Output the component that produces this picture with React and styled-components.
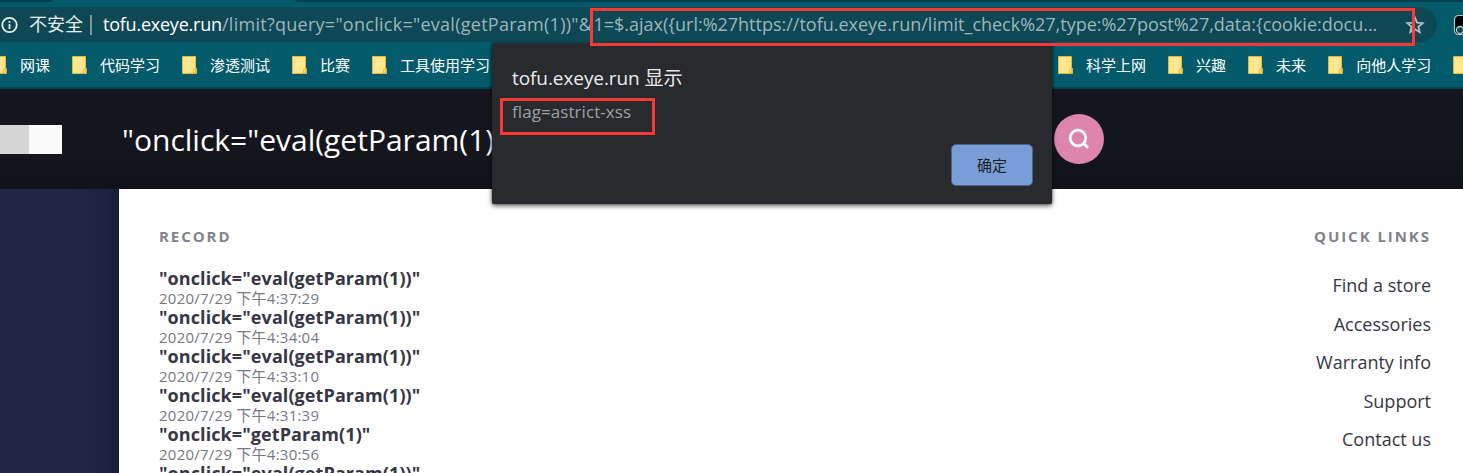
import React from 'react';
import styled, { createGlobalStyle } from 'styled-components';

const GlobalStyle = createGlobalStyle`
  *, *::before, *::after { box-sizing: border-box; }
  body { margin: 0; overflow: hidden; background: #fff; }
  ul { list-style: none; margin: 0; padding: 0; }
`;

const Window = styled.div`
  position: relative;
  display: flex;
  flex-direction: column;
  width: 1463px;
  height: 473px;
  overflow: hidden;
  font-family: 'Open Sans', 'Noto Sans CJK SC', sans-serif;
`;

const TabStrip = styled.div`
  display: flex;
  justify-content: space-between;
  flex: none;
  height: 2px;
  background: #035a6b;
`;

const InactiveTabs = styled.div`
  width: ${(p) => p.$width}px;
  background: #033f4c;
  border-radius: ${(p) => (p.$left ? '0 0 3px 0' : '0 0 0 3px')};
`;

const Toolbar = styled.div`
  display: flex;
  align-items: center;
  flex: none;
  height: 45px;
  background: #035a6b;
`;

const AddressBar = styled.div`
  display: flex;
  align-items: center;
  flex: none;
  width: 1437px;
  height: 35px;
  border-radius: 0 18px 18px 0;
  background: #0e4854;
  color: #9db5ba;
  font-size: 18px;
  line-height: 35px;
  white-space: pre;
`;

const InfoIcon = styled.svg`
  flex: none;
  width: 18px;
  height: 18px;
`;

const Security = styled.span`
  width: 54px;
  margin-left: 11px;
  color: #e4eced;
`;

const Divider = styled.span`
  width: 2px;
  height: 20px;
  margin: 0 11px 0 7px;
  background: #7d979d;
`;

const Host = styled.span`
  width: 119px;
  color: #fff;
  letter-spacing: -0.23px;
`;

const Path = styled.span`
  flex: none;
  width: 371.5px;
  letter-spacing: 0.27px;
`;

const Payload = styled.span`
  flex: 1;
  letter-spacing: -0.01px;
`;

const StarIcon = styled.svg`
  flex: none;
  width: 20px;
  height: 20px;
  margin-right: 12px;
`;

const ExtensionIcon = styled.svg`
  flex: none;
  width: 22px;
  height: 22px;
  margin-left: 16px;
`;

const BookmarkBar = styled.nav`
  display: flex;
  align-items: center;
  flex: none;
  gap: 22px;
  height: 42px;
  margin-left: -8px;
  padding-bottom: 4px;
  background: #035a6b;
  border-bottom: 2px solid #04424f;
`;

const BookmarkLink = styled.span`
  display: flex;
  align-items: center;
  gap: 13px;
  flex: none;
  color: #fff;
  font-size: 15px;
  line-height: 20px;
`;

const FolderSvg = styled.svg`
  width: 15px;
  height: 18px;
`;

const CoveredSpace = styled.span`
  flex: none;
  width: 524px;
`;

const Header = styled.header`
  display: flex;
  align-items: center;
  flex: none;
  height: 100px;
  background: linear-gradient(#15161f 0%, #14151d 65%, #111218 100%);
`;

const Mosaic = styled.div`
  flex: none;
  width: 62px;
  height: 29px;
  margin-right: 60px;
  background: linear-gradient(90deg, #d6d6d6 29px, #fafafa 29px);
`;

const Query = styled.div`
  width: 931.5px;
  padding-top: 2px;
  color: #fff;
  font-size: 30px;
  line-height: 40px;
`;

const SearchButton = styled.div`
  display: flex;
  align-items: center;
  justify-content: center;
  width: 50px;
  height: 50px;
  border-radius: 50%;
  background: #dd85ad;
`;

const Main = styled.main`
  display: flex;
  flex: 1;
  min-height: 0;
`;

const SideStrip = styled.aside`
  flex: none;
  width: 119px;
  background: linear-gradient(90deg, #1f2846 60%, #1c243f 85%, #181f37 100%);
`;

const Panel = styled.section`
  display: flex;
  justify-content: space-between;
  flex: 1;
  padding: 37px 32px 0 40px;
  background: #fff;
`;

const Heading = styled.h2`
  margin: 0 0 ${(p) => p.$gap}px;
  color: #82838d;
  font-size: 15px;
  font-weight: 700;
  line-height: 20px;
  letter-spacing: 1.95px;
`;

const RecordTitle = styled.div`
  height: 22px;
  color: #363646;
  font-size: 18px;
  font-weight: 700;
  line-height: 22px;
  letter-spacing: 0.09px;
`;

const RecordDate = styled.div`
  height: 17px;
  color: #777983;
  font-size: 15px;
  line-height: 19px;
  letter-spacing: 0.24px;
`;

const LinkColumn = styled.div`
  text-align: right;
`;

const QuickLink = styled.li`
  height: 38.5px;
  color: #363646;
  font-size: 18px;
  line-height: 30px;
`;

const Dialog = styled.div`
  position: absolute;
  left: 492px;
  top: 43px;
  display: flex;
  flex-direction: column;
  width: 560px;
  height: 161px;
  padding: 22px 19px 18px 20px;
  border-radius: 2px;
  background: #292a2d;
  box-shadow: 0 2px 5px rgba(0, 0, 0, 0.6), 0 0 2px rgba(0, 0, 0, 0.5);
`;

const DialogTitle = styled.div`
  color: #e8eaed;
  font-size: 19px;
  line-height: 26px;
  letter-spacing: -0.08px;
`;

const DialogText = styled.div`
  margin-top: 9px;
  color: #9aa0a6;
  font-size: 17px;
  line-height: 24px;
  letter-spacing: 0.07px;
`;

const ConfirmButton = styled.div`
  align-self: flex-end;
  width: 82px;
  height: 42px;
  margin-top: auto;
  border: 1px solid #4a6590;
  border-radius: 5px;
  background: #7a9dd8;
  color: #202124;
  font-size: 15px;
  line-height: 40px;
  text-align: center;
`;

const Highlight = styled.div`
  position: absolute;
  left: ${(p) => p.$x}px;
  top: ${(p) => p.$y}px;
  width: ${(p) => p.$w}px;
  height: ${(p) => p.$h}px;
  border: 3px solid #fd3636;
`;

const Folder = () => (
  <FolderSvg viewBox="0 0 15 18">
    <path d="M0.5 0.5h13v11l1 1v5h-14z" fill="#ffe68f" stroke="#dfb83c" />
    <path d="M11.5 17v-3.5l2-1.5v5z" fill="#ffe074" stroke="#dfb83c" strokeWidth=".8" />
  </FolderSvg>
);

const Bookmark = ({ label }) => (
  <BookmarkLink>
    <Folder />
    {label}
  </BookmarkLink>
);

const nearBookmarks = ['网课', '代码学习', '渗透测试', '比赛', '工具使用学习'];
const farBookmarks = ['科学上网', '兴趣', '未来', '向他人学习', ''];

const records = [
  ['"onclick="eval(getParam(1))"', '2020/7/29 下午4:37:29'],
  ['"onclick="eval(getParam(1))"', '2020/7/29 下午4:34:04'],
  ['"onclick="eval(getParam(1))"', '2020/7/29 下午4:33:10'],
  ['"onclick="eval(getParam(1))"', '2020/7/29 下午4:31:39'],
  ['"onclick="getParam(1)"', '2020/7/29 下午4:30:56'],
  ['"onclick="eval(getParam(1))"', ''],
];

const quickLinks = ['Find a store', 'Accessories', 'Warranty info', 'Support', 'Contact us'];

export default function App() {
  return (
    <Window>
      <GlobalStyle />
      <TabStrip>
        <InactiveTabs $width={52} $left />
        <InactiveTabs $width={1168} />
      </TabStrip>
      <Toolbar>
        <AddressBar>
          <InfoIcon viewBox="0 0 18 18">
            <circle cx="9.5" cy="9" r="7.2" fill="none" stroke="#e4eced" strokeWidth="1.8" />
            <path d="M9.5 8v5M9.5 5v1.8" stroke="#e4eced" strokeWidth="1.8" />
          </InfoIcon>
          <Security>不安全</Security>
          <Divider />
          <Host>tofu.exeye.run</Host>
          <Path>{'/limit?query="onclick="eval(getParam(1))"&'}</Path>
          <Payload>
            {'1=$.ajax({url:%27https://tofu.exeye.run/limit_check%27,type:%27post%27,data:{cookie:docu...'}
          </Payload>
          <StarIcon viewBox="0 0 20 20">
            <path
              d="M10 2.6l2.1 5.1 5.5.5-4.2 3.6 1.3 5.4-4.7-2.9-4.7 2.9 1.3-5.4-4.2-3.6 5.5-.5z"
              fill="none"
              stroke="#b0c2c6"
              strokeWidth="1.8"
            />
          </StarIcon>
        </AddressBar>
        <ExtensionIcon viewBox="0 0 22 22">
          <rect x="1.5" y="1.5" width="19" height="19" rx="4" fill="#000" stroke="#b7bec0" strokeWidth="1.2" />
          <circle cx="7" cy="16" r="3.5" fill="#0b4450" stroke="#b7d0d6" strokeWidth="1.3" />
        </ExtensionIcon>
      </Toolbar>
      <BookmarkBar>
        {nearBookmarks.map((label) => (
          <Bookmark key={label} label={label} />
        ))}
        <CoveredSpace />
        {farBookmarks.map((label) => (
          <Bookmark key={label} label={label} />
        ))}
      </BookmarkBar>
      <Header>
        <Mosaic />
        <Query>{'"onclick="eval(getParam(1))"'}</Query>
        <SearchButton>
          <svg width="22" height="22" viewBox="0 0 22 22" fill="none" stroke="#fff" strokeWidth="2.7">
            <circle cx="10" cy="10" r="7.8" />
            <path d="M15.4 15.2l4.6 4.6" />
          </svg>
        </SearchButton>
      </Header>
      <Main>
        <SideStrip />
        <Panel>
          <div>
            <Heading $gap={21}>RECORD</Heading>
            {records.map(([title, date], i) => (
              <React.Fragment key={i}>
                <RecordTitle>{title}</RecordTitle>
                <RecordDate>{date}</RecordDate>
              </React.Fragment>
            ))}
          </div>
          <LinkColumn>
            <Heading $gap={24}>QUICK LINKS</Heading>
            <ul>
              {quickLinks.map((label) => (
                <QuickLink key={label}>{label}</QuickLink>
              ))}
            </ul>
          </LinkColumn>
        </Panel>
      </Main>
      <Dialog>
        <DialogTitle>tofu.exeye.run 显示</DialogTitle>
        <DialogText>flag=astrict-xss</DialogText>
        <ConfirmButton>确定</ConfirmButton>
      </Dialog>
      <Highlight $x={590} $y={8} $w={825} $h={38} />
      <Highlight $x={500} $y={98} $w={155} $h={37} />
    </Window>
  );
}
